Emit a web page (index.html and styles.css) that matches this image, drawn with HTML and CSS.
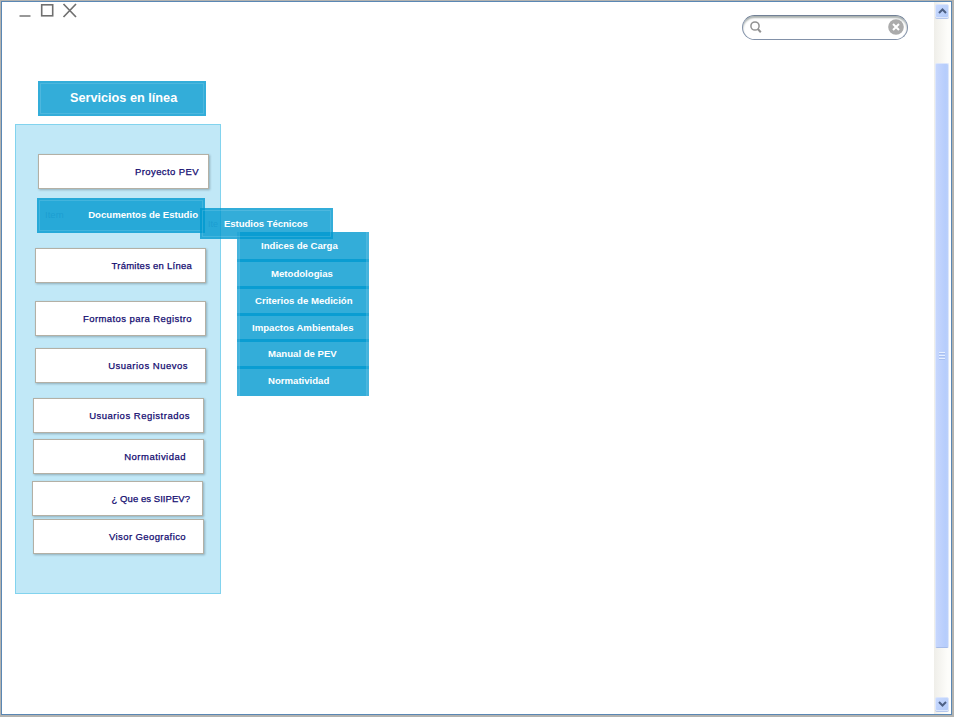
FILE: index.html
```html
<!DOCTYPE html>
<html lang="es">
<head>
<meta charset="utf-8">
<title>Servicios en línea</title>
<link rel="stylesheet" href="styles.css">
</head>
<body>
<div class="window">
  <main class="content">
    <header class="topbar">
      <svg class="controls" width="60" height="18" viewBox="0 0 60 18" fill="none" stroke="#707070">
        <path d="M0.500 14H11.500" stroke="#868686" stroke-width="1.700"/>
        <rect x="22.700" y="2.800" width="11" height="11" stroke-width="1.600"/>
        <path d="M44.500 2L57 15M57 2L44.500 15" stroke-width="1.700"/>
      </svg>
      <div class="search">
        <svg width="12" height="13" viewBox="0 0 12 13" fill="none" stroke="#929292"><circle cx="5" cy="5" r="4.100" stroke-width="1.500"/><path d="M7.800 8L10.800 11.200" stroke-width="2"/></svg>
        <svg width="16" height="16" viewBox="0 0 16 16"><circle cx="8" cy="8" r="7.800" fill="#ababab"/><path d="M5 5L11 11M11 5L5 11" stroke="#fff" stroke-width="2"/></svg>
      </div>
    </header>
    <h1 class="tile title"><span>Servicios en línea</span></h1>
    <nav class="panel">
      <a class="item proyecto"><span>Proyecto PEV</span></a>
      <div class="tile documentos">
        <i class="ghost">Item</i><span>Documentos de Estudio</span>
        <div class="submenu">
          <div class="tile estudios"><i class="ghost">Ite</i><span>Estudios Técnicos</span></div>
          <div class="list">
            <a class="tile indices"><span>Indices de Carga</span></a>
            <a class="tile metodo"><span>Metodologias</span></a>
            <a class="tile criterios"><span>Criterios de Medición</span></a>
            <a class="tile impactos"><span>Impactos Ambientales</span></a>
            <a class="tile manual"><span>Manual de PEV</span></a>
            <a class="tile norma"><span>Normatividad</span></a>
          </div>
        </div>
      </div>
      <a class="item tramites"><span>Trámites en Línea</span></a>
      <a class="item formatos"><span>Formatos para Registro</span></a>
      <a class="item nuevos"><span>Usuarios Nuevos</span></a>
      <a class="item registrados"><span>Usuarios Registrados</span></a>
      <a class="item normatividad"><span>Normatividad</span></a>
      <a class="item siipev"><span>¿ Que es SIIPEV?</span></a>
      <a class="item visor"><span>Visor Geografico</span></a>
    </nav>
  </main>
  <div class="scrollbar">
    <div class="arrow"><svg width="9" height="6" viewBox="0 0 9 6" fill="none" stroke="#4d6185" stroke-width="2"><path d="M1 5L4.500 1.500L8 5"/></svg></div>
    <div class="thumb"><i></i><i></i><i></i></div>
    <div class="arrow down"><svg width="9" height="6" viewBox="0 0 9 6" fill="none" stroke="#4d6185" stroke-width="2"><path d="M1 1L4.500 4.500L8 1"/></svg></div>
  </div>
</div>
</body>
</html>
```
FILE: styles.css
```css
* { box-sizing: border-box; }
body {
  margin: 0;
  height: 717px;
  padding: 1px 2px 2px 1px;
  overflow: hidden;
  background: #b3b3b0;
  font-family: "Liberation Sans", Arial, sans-serif;
}
.window {
  display: flex;
  height: 714px;
  border: 1px solid #5a87b4;
  background: #fff;
}
.content { width: 932px; }
.topbar {
  display: flex;
  justify-content: space-between;
  align-items: flex-start;
  height: 79px;
  padding-left: 17px;
  padding-right: 26px;
}
.controls { display: block; }
.search {
  display: flex;
  justify-content: space-between;
  align-items: center;
  width: 166px;
  height: 25px;
  margin-top: 13px;
  padding: 0 3px 1px 7px;
  border: 1px solid #8291a8;
  border-top-color: #718096;
  border-radius: 13px;
  box-shadow: inset 0 2px 2px #a9b0ae;
}

.tile {
  display: flex;
  align-items: center;
  background: rgba(0, 152, 207, 0.8);
  outline: 1px solid rgba(255, 255, 255, 0.13);
  outline-offset: -3px;
  color: #fff;
  font-size: 9.6px;
  font-weight: bold;
  white-space: nowrap;
}
.title {
  width: 168px;
  height: 35px;
  margin: 0 0 8px 36px;
  padding: 0 0 2px 32px;
  font-size: 12.7px;
}

.panel {
  display: flex;
  flex-direction: column;
  width: 206px;
  height: 470px;
  margin-left: 13px;
  padding: 29px 0 0 16px;
  border: 1px solid #82d3ee;
  background: #c1e8f7;
}
.item {
  display: flex;
  flex-shrink: 0;
  align-items: center;
  justify-content: flex-end;
  width: 171px;
  height: 35px;
  padding-right: 9px;
  border: 1px solid #b3b0a5;
  background: #fff;
  box-shadow: 1px 1px 2px rgba(70, 90, 100, 0.4);
  color: #120b70;
  font-size: 9.5px;
  white-space: nowrap;
  -webkit-text-stroke: 0.25px #120b70;
}
.proyecto { margin-left: 6px; letter-spacing: 0.4px; }
.documentos {
  position: relative;
  flex-shrink: 0;
  width: 168px;
  height: 35px;
  margin: 9px 0 15px 5px;
  padding: 0 7px 2px 8px;
  justify-content: space-between;
}
.ghost { font-style: normal; font-weight: normal; color: rgba(0, 130, 190, 0.3); }
.tramites { margin-left: 3px; padding-right: 13px; letter-spacing: 0.25px; }
.formatos { margin: 18px 0 0 3px; padding-right: 13px; letter-spacing: 0.42px; }
.nuevos { margin: 12px 0 0 3px; padding-right: 17px; letter-spacing: 0.5px; }
.registrados { margin: 15px 0 0 1px; padding-right: 13px; letter-spacing: 0.5px; }
.normatividad { margin: 6px 0 0 1px; padding-right: 17px; letter-spacing: 0.48px; }
.siipev { margin: 7px 0 0 0; padding-right: 12px; letter-spacing: 0.05px; }
.visor { margin: 3px 0 0 1px; padding-right: 17px; letter-spacing: 0.4px; }

/* Fly-out menu over the page */
.submenu {
  position: absolute;
  left: 163px;
  top: 10px;
  width: 169px;
}
.estudios { width: 133px; height: 31px; padding-left: 8px; letter-spacing: -0.06px; }
.estudios .ghost { width: 16px; font-size: 9px; }
.list { width: 132px; margin: -7px 0 0 37px; }
.list .tile {
  height: 30px;
  margin-bottom: -3px;
  padding-bottom: 1px;
  outline: 0;
  box-shadow: inset 2px 0 0 rgba(0, 152, 207, 0.1), inset 3px 0 0 rgba(255, 255, 255, 0.13), inset -2px 0 0 rgba(0, 152, 207, 0.1), inset -3px 0 0 rgba(255, 255, 255, 0.13);
}
.list .indices { padding: 0 0 3px 24px; }
.metodo { padding-left: 34px; }
.criterios { padding-left: 18px; }
.impactos { padding-left: 15px; }
.manual, .norma { padding-left: 31px; }
.list .impactos { height: 29px; padding-bottom: 0; }
.list .manual { height: 30px; padding-bottom: 2px; }

.scrollbar {
  display: flex;
  flex-direction: column;
  width: 16px;
  padding: 2px 0 3px 1px;
  background: linear-gradient(90deg, #efeee9, #fdfdfa 85%);
}
.arrow {
  display: flex;
  align-items: center;
  justify-content: center;
  width: 14px;
  height: 14px;
  border: 1px solid #dce6fb;
  border-radius: 2px;
  background: linear-gradient(135deg, #c9daff, #b3cbf8);
  box-shadow: 0 1px 0 #b4c7ed;
}
.thumb {
  display: flex;
  flex-direction: column;
  align-items: center;
  justify-content: center;
  gap: 1px;
  width: 14px;
  height: 585px;
  margin-top: 45px;
  border: 1px solid #dce6fb;
  border-bottom-color: #a6bce9;
  border-radius: 2px;
  background: linear-gradient(90deg, #c6d6fd, #b6cdfc 80%, #bad0fa);
}
.thumb i { width: 6px; height: 2px; background: #e6efff; border-bottom: 1px solid #a8c0f0; }
.down { margin-top: auto; }
```
